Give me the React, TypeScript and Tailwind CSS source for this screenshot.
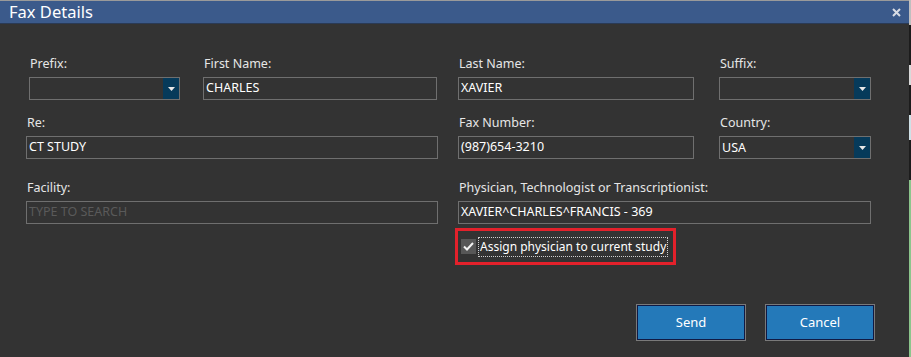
import React from 'react';

const font = { fontFamily: '"Noto Sans", "Open Sans", sans-serif' };

const Label = ({ children }: { children: React.ReactNode }) => (
  <div className="text-[12.5px] leading-[16px] text-[#e6e6e6] pl-[1px] mb-[5px]">{children}</div>
);

const TextBox = ({ value, placeholder }: { value?: string; placeholder?: string }) => (
  <div className="h-[23px] border border-[#6f6f6f] bg-[#333333] flex items-center px-[2px] text-[12.5px] leading-none">
    {value ? (
      <span className="text-white">{value}</span>
    ) : (
      <span className="text-[#5a5a5a]">{placeholder}</span>
    )}
  </div>
);

const Select = ({ value }: { value?: string }) => (
  <div className="h-[23px] border border-[#6f6f6f] bg-[#333333] flex text-[12.5px] leading-none">
    <div className="flex-1 flex items-center px-[2px] pt-[2px] text-white">{value}</div>
    <div className="w-[16px] bg-[#063a5a] flex items-center justify-center">
      <svg width="7" height="4" viewBox="0 0 7 4">
        <path d="M0 0h7L3.5 4z" fill="#e8e8e8" />
      </svg>
    </div>
  </div>
);

export default function App() {
  return (
    <div className="w-[911px] h-[357px] flex bg-[#333333] overflow-hidden" style={font}>
      <div className="w-[909px] flex flex-col">
        {/* title bar */}
        <div className="h-[1px] bg-[#9a9a9a]" />
        <div className="h-[23px] bg-[#3b5a8b] flex items-center justify-between pl-[9px] pr-[8px] border-b border-[#2a3a55]">
          <span className="text-[16.5px] text-white leading-none">Fax Details</span>
          <svg width="9" height="9" viewBox="0 0 9 9">
            <path d="M1 1l7 7M8 1L1 8" stroke="#d8dce4" strokeWidth="2" />
          </svg>
        </div>

        {/* form */}
        <div className="flex-1 pl-[26px] pt-[32px] flex flex-col">
          {/* row 1 */}
          <div className="flex">
            <div className="w-[151px] ml-[3px]">
              <Label>Prefix:</Label>
              <Select />
            </div>
            <div className="w-[234px] ml-[23px]">
              <Label>First Name:</Label>
              <TextBox value="CHARLES" />
            </div>
            <div className="w-[236px] ml-[21px]">
              <Label>Last Name:</Label>
              <TextBox value="XAVIER" />
            </div>
            <div className="w-[152px] ml-[25px]">
              <Label>Suffix:</Label>
              <Select />
            </div>
          </div>

          {/* row 2 */}
          <div className="flex mt-[15px]">
            <div className="w-[412px]">
              <Label>Re:</Label>
              <TextBox value="CT STUDY" />
            </div>
            <div className="w-[236px] ml-[20px]">
              <Label>Fax Number:</Label>
              <TextBox value="(987)654-3210" />
            </div>
            <div className="w-[152px] ml-[25px]">
              <Label>Country:</Label>
              <Select value="USA" />
            </div>
          </div>

          {/* row 3 */}
          <div className="flex mt-[21px]">
            <div className="w-[412px]">
              <Label>Facility:</Label>
              <TextBox placeholder="TYPE TO SEARCH" />
            </div>
            <div className="w-[413px] ml-[20px] flex flex-col">
              <Label>Physician, Technologist or Transcriptionist:</Label>
              <TextBox value="XAVIER^CHARLES^FRANCIS - 369" />
              <div className="mt-[4px] -ml-[3px] w-[221px] h-[37px] border-[3px] border-[#e3212b] flex items-center pl-[3px] whitespace-nowrap">
                <div className="w-[15px] h-[15px] shrink-0 bg-[#575757] flex items-center justify-center">
                  <svg width="11" height="9" viewBox="0 0 11 9">
                    <path d="M1 4.5l3 3L10 1" stroke="#f2f2f2" strokeWidth="2" fill="none" />
                  </svg>
                </div>
                <span className="ml-[2px] px-[1px] shrink-0 text-[12px] leading-[18px] text-white border border-dotted border-[#cfcfcf]">
                  Assign physician to current study
                </span>
              </div>
            </div>
          </div>

          {/* buttons */}
          <div className="flex justify-end gap-[19px] pr-[34px] mt-[39px]">
            <button className="w-[110px] h-[37px] border border-[#7a7a7a] p-0">
              <div className="w-full h-full border border-[#101a44] bg-[#2479b9] flex items-center justify-center text-[13px] text-white">
                Send
              </div>
            </button>
            <button className="w-[110px] h-[37px] border border-[#7a7a7a] p-0">
              <div className="w-full h-full border border-[#101a44] bg-[#2479b9] flex items-center justify-center text-[13px] text-white">
                Cancel
              </div>
            </button>
          </div>
        </div>
      </div>

      {/* sliver of the window behind */}
      <div className="w-[2px] flex flex-col">
        <div className="h-[25px] bg-[#bfbfbf]" />
        <div className="h-[40px] bg-[#1c1c1c]" />
        <div className="h-[20px] bg-[#d9d9d9]" />
        <div className="h-[30px] bg-[#1c1c1c]" />
        <div className="h-[25px] bg-[#cfe0e6]" />
        <div className="h-[40px] bg-[#1c1c1c]" />
        <div className="flex-1 bg-[#8cc58c]" />
      </div>
    </div>
  );
}
